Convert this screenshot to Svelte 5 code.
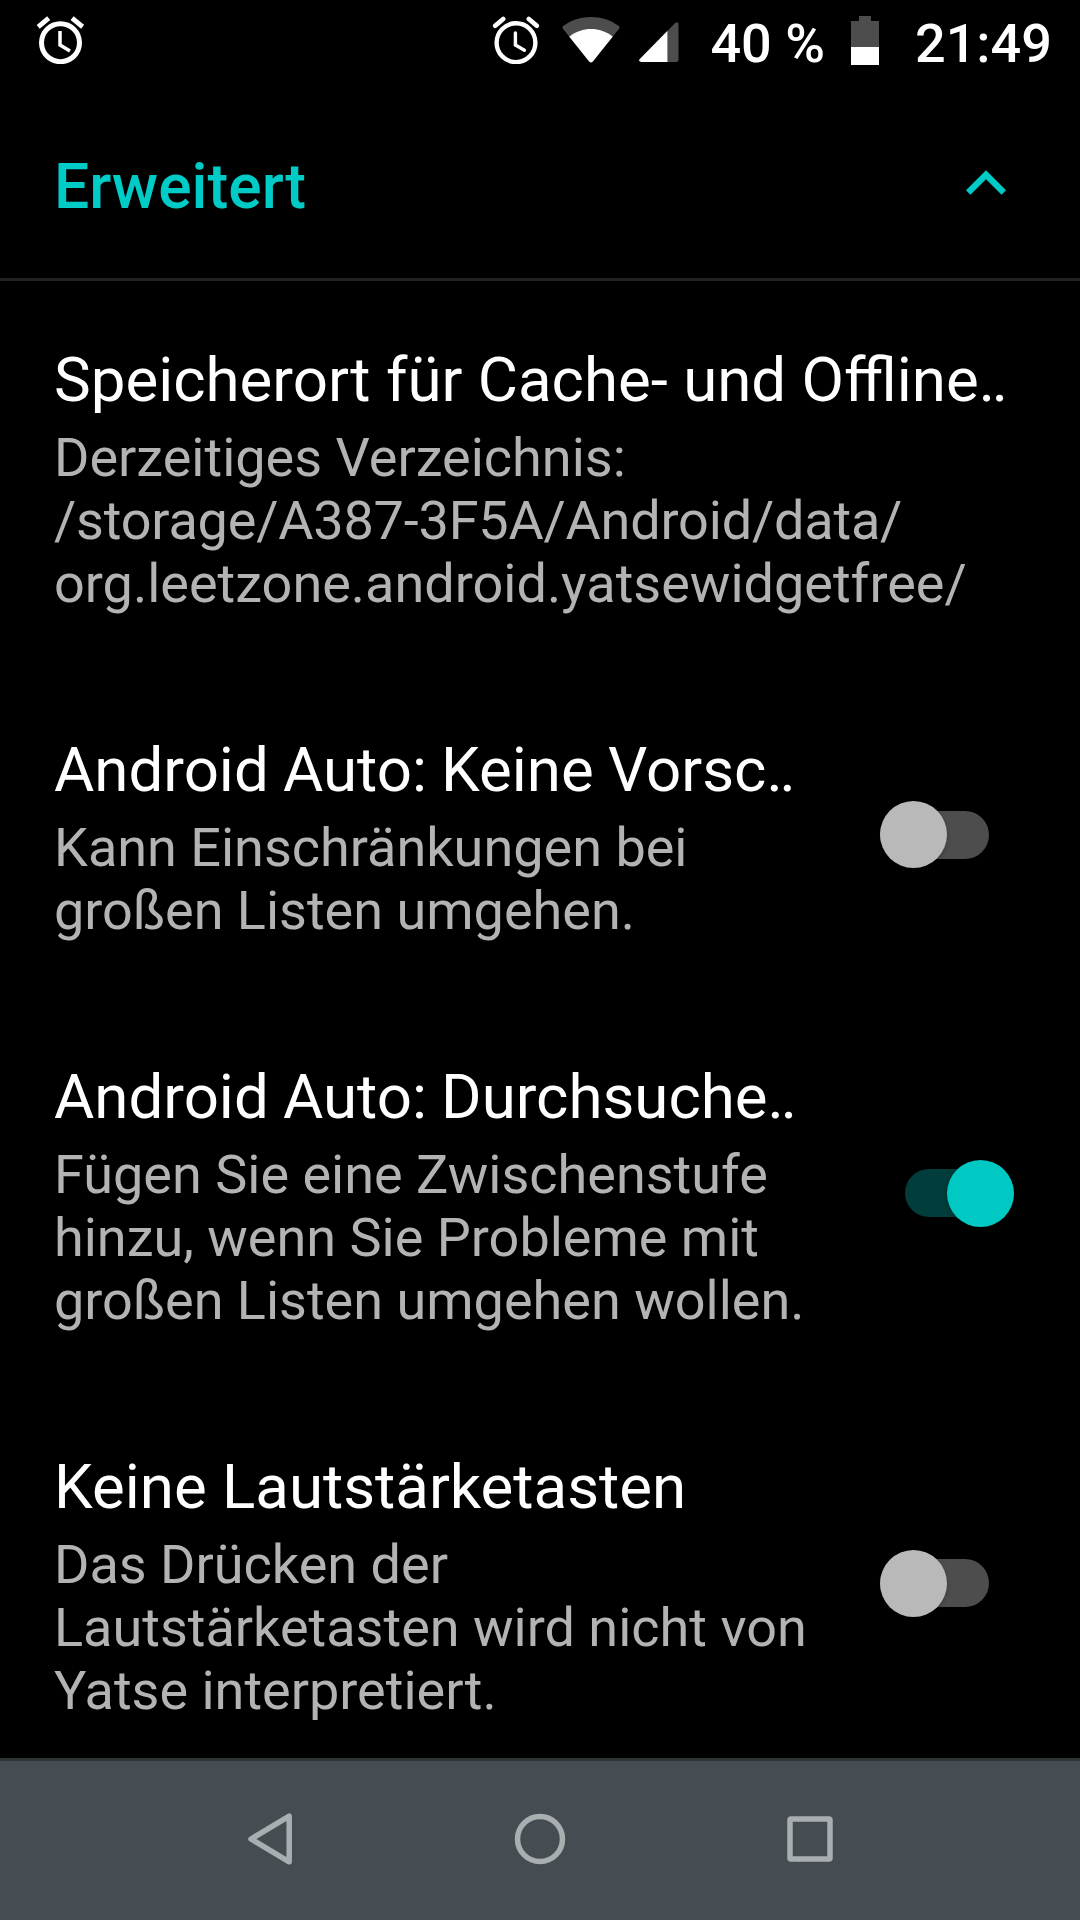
<script lang="ts">
  interface Setting {
    readonly title: string;
    readonly truncated?: boolean;
    readonly summary: ReadonlyArray<string>;
    readonly enabled?: boolean;
  }

  let expanded = $state(true);

  let settings = $state<Setting[]>([
    {
      title: "Speicherort für Cache- und Offline",
      truncated: true,
      summary: [
        "Derzeitiges Verzeichnis:",
        "/storage/A387-3F5A/Android/data/",
        "org.leetzone.android.yatsewidgetfree/",
      ],
    },
    {
      title: "Android Auto: Keine Vorsc",
      truncated: true,
      summary: ["Kann Einschränkungen bei", "großen Listen umgehen."],
      enabled: false,
    },
    {
      title: "Android Auto: Durchsuche",
      truncated: true,
      summary: ["Fügen Sie eine Zwischenstufe", "hinzu, wenn Sie Probleme mit", "großen Listen umgehen wollen."],
      enabled: true,
    },
    {
      title: "Keine Lautstärketasten",
      summary: ["Das Drücken der", "Lautstärketasten wird nicht von", "Yatse interpretiert."],
      enabled: false,
    },
  ]);

  const toggle = (index: number): void => {
    settings[index] = { ...settings[index], enabled: !settings[index].enabled };
  };
</script>

<div class="screen">
  <div class="status-bar">
    <svg class="alarm" viewBox="0 0 48 48">
      <circle cx="24.5" cy="26.7" r="19" fill="none" stroke="#fff" stroke-width="5" />
      <path d="M2.2 10.8 12.7 2.2M46.6 10.8 36.1 2.2" stroke="#fff" stroke-width="4.8" />
      <path d="M24 15v14l10 6" fill="none" stroke="#fff" stroke-width="3.5" />
    </svg>

    <svg class="alarm alarm-system" viewBox="0 0 48 48">
      <circle cx="24" cy="26.7" r="19.4" fill="none" stroke="#fff" stroke-width="4.4" />
      <path d="M3.2 9.8 11.2 3M44.8 9.8 36.8 3" stroke="#fff" stroke-width="4.6" stroke-linecap="round" />
      <path d="M23.4 17v12l9 5.2" fill="none" stroke="#fff" stroke-width="3.4" stroke-linecap="round" />
    </svg>
    <svg class="wifi" viewBox="0 0 58 46">
      <path d="M.8 11.5Q-.2 10 1.2 9C17-3 41-3 56.8 9q1.4 1 .4 2.5L50.5 20h-43Z" fill="#4d4d4d" />
      <path d="M7.3 19.7C20 9.5 38 9.5 50.7 19.7L30.7 44.8q-1.7 1.6-3.4 0Z" fill="#fff" />
    </svg>
    <svg class="signal" viewBox="0 0 40 40">
      <path d="M28.5 9 36.3.8Q39.5-.8 39.5 2.5V38q0 2-2 2h-9Z" fill="#4d4d4d" />
      <path d="M28.5 8.7V40H2Q-1 39 .8 37Z" fill="#fff" />
    </svg>
    <span class="percent">40 %</span>
    <svg class="battery" viewBox="0 0 28 49">
      <path d="M8 0h12v5h8v26H0V5h8Z" fill="#4d4d4d" />
      <path d="M0 31h28v18H0Z" fill="#fff" />
    </svg>
    <span class="time">21:49</span>
  </div>

  <button type="button" class="section-header" onclick={() => (expanded = !expanded)}>
    <span>Erweitert</span>
    <svg class="chevron" class:collapsed={!expanded} viewBox="0 0 40 25">
      <path d="M2.2 22.5 20 4.7l17.8 17.8" fill="none" stroke="#00cbc6" stroke-width="6.3" />
    </svg>
  </button>

  <main class="settings">
    {#if expanded}
      {#each settings as setting, index}
        <div class="setting">
          <div class="text">
            <h2 class:compact={setting.truncated && setting.enabled !== undefined}>
              {setting.title}{#if setting.truncated}<span class="dots">..</span>{/if}
            </h2>
            <p>
              {#each setting.summary as line}
                <span class:path={line.startsWith("/")}>{line}</span>
              {/each}
            </p>
          </div>
          {#if setting.enabled !== undefined}
            <button
              type="button"
              class="switch"
              class:on={setting.enabled}
              role="switch"
              aria-checked={setting.enabled}
              aria-label={setting.title}
              onclick={() => toggle(index)}
            >
              <span class="track"><span class="thumb"></span></span>
            </button>
          {/if}
        </div>
      {/each}
    {/if}
  </main>

  <nav class="nav-bar">
    <svg viewBox="0 0 54 54">
      <path d="M8 27 46.2 4.2V49.8Z" />
    </svg>
    <svg viewBox="0 0 54 54">
      <circle cx="27" cy="27" r="22.5" />
    </svg>
    <svg viewBox="0 0 54 54">
      <rect x="7" y="7" width="40" height="40" rx="1" />
    </svg>
  </nav>
</div>

<style>
  :global(body) {
    background: #000;
  }

  .screen {
    display: flex;
    flex-direction: column;
    width: 1080px;
    height: 1920px;
    overflow: hidden;
    background: #000;
    color: #fff;
    font-family: Roboto, sans-serif;
  }

  svg {
    display: block;
    flex: none;
  }

  button {
    border: 0;
    padding: 0;
    background: none;
    font: inherit;
    cursor: pointer;
  }

  .status-bar {
    display: flex;
    align-items: flex-start;
    flex: none;
    box-sizing: border-box;
    height: 84px;
    padding: 16px 28px 0 36px;
    font-size: 54px;
    font-weight: 500;
    line-height: 56px;
    white-space: nowrap;
  }

  .alarm {
    width: 48px;
    height: 48px;
  }

  .alarm-system {
    margin-left: auto;
  }

  .wifi {
    width: 58px;
    height: 46px;
    margin: 1px 0 0 22px;
  }

  .signal {
    width: 40px;
    height: 40px;
    margin: 6px 0 0 19px;
  }

  .percent {
    margin-left: 31px;
  }

  .battery {
    width: 28px;
    height: 49px;
    margin-left: 26px;
  }

  .time {
    margin-left: 36px;
  }

  .section-header {
    display: flex;
    align-items: center;
    justify-content: space-between;
    flex: none;
    box-sizing: border-box;
    height: 197px;
    padding: 11px 74px 0 54px;
    border-bottom: 3px solid #212121;
    color: #00cbc6;
    font-size: 62.4px;
    font-weight: 500;
  }

  .chevron {
    width: 40px;
    height: 25px;
    margin-top: -9px;
  }

  .collapsed {
    transform: rotate(180deg);
  }

  .settings {
    flex: 1;
    min-height: 0;
    overflow: hidden;
  }

  .setting {
    display: flex;
    align-items: center;
    justify-content: space-between;
    padding: 62px 0 56px 54px;
  }

  h2 {
    margin: 0 0 9px;
    font-size: 61.8px;
    font-weight: 400;
    line-height: 74px;
    white-space: nowrap;
  }

  .compact {
    word-spacing: -1.1px;
  }

  .dots {
    letter-spacing: -3.2px;
  }

  p {
    margin: 0;
    color: #b3b3b3;
    font-size: 54px;
    line-height: 63px;
    white-space: nowrap;
  }

  p span {
    display: block;
  }

  .path {
    letter-spacing: -0.19px;
  }

  .switch {
    margin: 0 91px 6px 0;
  }

  .switch.on {
    margin-right: 66px;
  }

  .track {
    display: flex;
    align-items: center;
    width: 109px;
    height: 48px;
    border-radius: 24px;
    background: #4d4d4d;
  }

  .thumb {
    width: 67px;
    height: 67px;
    flex: none;
    border-radius: 50%;
    background: #b9b9b9;
    box-shadow: 0 2px 5px rgba(0, 0, 0, 0.25);
  }

  .on .track {
    justify-content: flex-end;
    background: #003d3b;
  }

  .on .thumb {
    background: #00c8c3;
  }

  .nav-bar {
    display: flex;
    align-items: center;
    justify-content: center;
    gap: 216px;
    flex: none;
    box-sizing: border-box;
    height: 162px;
    padding-bottom: 3px;
    border-top: 3px solid #2d3535;
    background: #454d53;
  }

  .nav-bar svg {
    width: 54px;
    height: 54px;
    fill: none;
    stroke: #a9aeb0;
    stroke-width: 5.5;
    stroke-linejoin: round;
  }
</style>
